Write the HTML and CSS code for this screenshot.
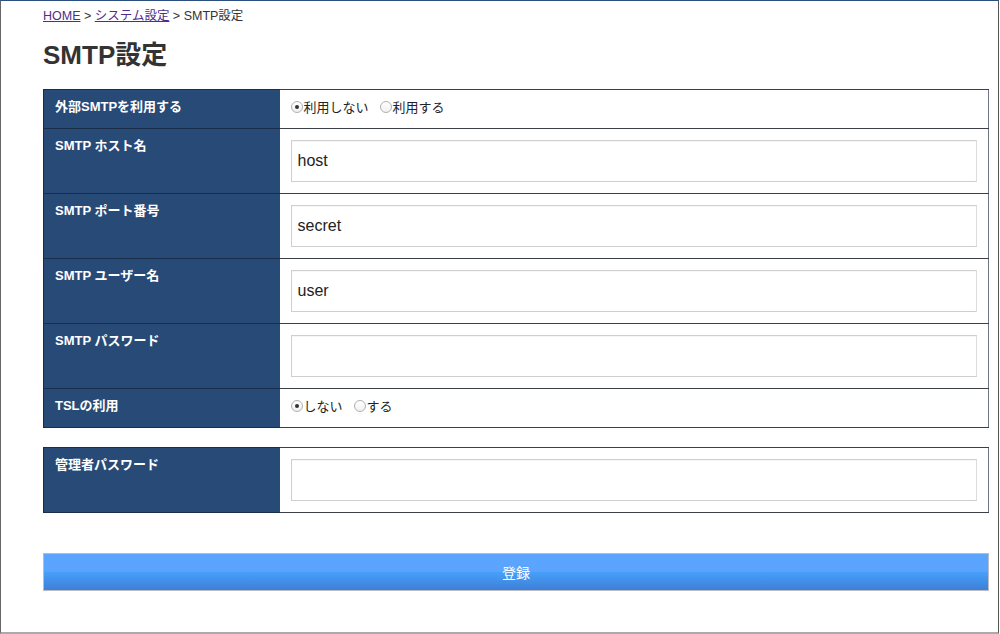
FILE: index.html
```html
<!DOCTYPE html>
<html lang="ja">
<head>
<meta charset="utf-8">
<title>SMTP設定</title>
<link rel="stylesheet" href="styles.css">
</head>
<body>
<div class="frame">
  <div class="breadcrumb">
    <a href="#" class="crumb">HOME</a> &gt; <a href="#" class="crumb">システム設定</a> &gt; SMTP設定
  </div>
  <h1 class="title">SMTP設定</h1>

  <table class="form-table">
    <tr class="row-short">
      <th class="label">外部SMTPを利用する</th>
      <td class="field">
        <div class="radios">
          <label class="radio"><span class="dot checked"></span>利用しない</label>
          <label class="radio"><span class="dot"></span>利用する</label>
        </div>
      </td>
    </tr>
    <tr>
      <th class="label">SMTP ホスト名</th>
      <td class="field"><div class="input">host</div></td>
    </tr>
    <tr>
      <th class="label">SMTP ポート番号</th>
      <td class="field"><div class="input">secret</div></td>
    </tr>
    <tr>
      <th class="label">SMTP ユーザー名</th>
      <td class="field"><div class="input">user</div></td>
    </tr>
    <tr>
      <th class="label">SMTP パスワード</th>
      <td class="field"><div class="input"></div></td>
    </tr>
    <tr class="row-short">
      <th class="label">TSLの利用</th>
      <td class="field">
        <div class="radios">
          <label class="radio"><span class="dot checked"></span>しない</label>
          <label class="radio"><span class="dot"></span>する</label>
        </div>
      </td>
    </tr>
  </table>

  <table class="form-table second">
    <tr>
      <th class="label">管理者パスワード</th>
      <td class="field"><div class="input"></div></td>
    </tr>
  </table>

  <div class="submit">登録</div>
</div>
</body>
</html>
```

FILE: styles.css
```css
html, body {
  margin: 0;
  padding: 0;
  background: #fff;
}
body {
  font-family: "Liberation Sans", "Noto Sans CJK JP", sans-serif;
  color: #333;
}
.frame {
  box-sizing: border-box;
  width: 999px;
  height: 634px;
  border-top: 1px solid #2b4f7e;
  border-left: 1px solid #666;
  border-right: 1px solid #555;
  border-bottom: 2px solid #aaa;
  padding: 7px 9px 0 42px;
}
.breadcrumb {
  font-size: 12.5px;
  line-height: 16px;
  color: #333;
}
.crumb {
  color: #4e2d8c;
  text-decoration: underline;
}
.title {
  margin: 16px 0 0 0;
  font-size: 26px;
  line-height: 30px;
  font-weight: bold;
  color: #333;
}
.form-table {
  margin: 19px 0 0 0;
  width: 946px;
  border-collapse: collapse;
  border: 1px solid #1c2a40;
  border-right-color: #6f7787;
}
.form-table.second {
  margin-top: 19px;
}
.label {
  box-sizing: border-box;
  width: 236px;
  background: #284a77;
  color: #fff;
  font-size: 13px;
  font-weight: bold;
  text-align: left;
  vertical-align: top;
  padding: 9px 12px 0 11px;
  line-height: 16px;
  border-top: 1px solid #1a2d4a;
  border-bottom: 1px solid #1a2d4a;
}
.field {
  padding: 11px 11px 11px 11px;
  border-top: 1px solid #3a3f48;
  border-bottom: 1px solid #3a3f48;
  vertical-align: middle;
  height: 42px;
}
.row-short .field {
  height: 16px;
  padding: 9px 11px 13px 11px;
}
.input {
  box-sizing: border-box;
  height: 42px;
  border: 1px solid #cfcfcf;
  border-right-color: #dcdcdc;
  box-shadow: inset 0 1px 1px rgba(0,0,0,0.04);
  padding: 0 6px;
  font-size: 16px;
  line-height: 40px;
  color: #222;
}
.radios {
  display: flex;
  gap: 11px;
  font-size: 13px;
  line-height: 16px;
  color: #222;
}
.radio {
  display: flex;
  align-items: center;
  font-family: "Noto Sans CJK JP", sans-serif;
}
.dot {
  box-sizing: border-box;
  width: 12px;
  height: 12px;
  border-radius: 50%;
  border: 1px solid #b0b0b0;
  background: linear-gradient(#fff, #f0f0f0);
  margin-right: 1px;
  position: relative;
}
.dot.checked::after {
  content: "";
  position: absolute;
  left: 3px;
  top: 3px;
  width: 4px;
  height: 4px;
  border-radius: 50%;
  background: #333;
}
.submit {
  box-sizing: border-box;
  margin: 40px 0 0 0;
  width: 946px;
  height: 38px;
  border: 1px solid #b9bcc2;
  background: linear-gradient(#5ba5fd 0%, #5aa4fd 48%, #47a0fb 50%, #3e7fd6 100%);
  color: #fff;
  font-size: 14px;
  line-height: 36px;
  text-align: center;
  font-family: "Noto Sans CJK JP", sans-serif;
}
```
